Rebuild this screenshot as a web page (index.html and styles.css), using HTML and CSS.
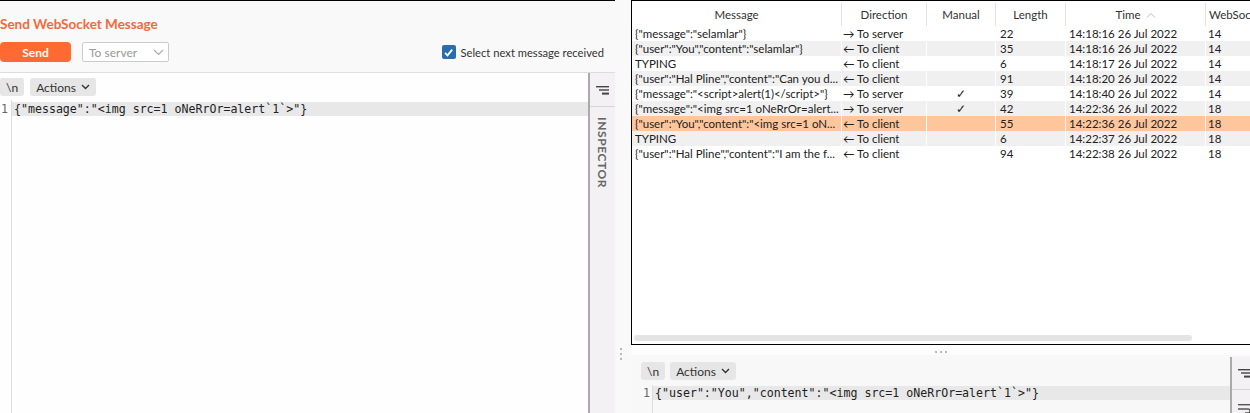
FILE: index.html
```html
<!DOCTYPE html>
<html>
<head>
<meta charset="utf-8">
<link rel="stylesheet" href="styles.css">
</head>
<body>
<div class="app">
  <section class="left">
    <header class="send-head">
      <h1 class="title">Send WebSocket Message</h1>
      <div class="send-row">
        <button class="btn-send">Send</button>
        <div class="select"><span>To server</span><svg class="chev" width="11" height="7" viewBox="0 0 11 7"><path d="M1 1l4.5 4.5L10 1" fill="none" stroke="#aaa" stroke-width="1.2"/></svg></div>
        <label class="chk"><span class="box"><svg width="13" height="13" viewBox="0 0 13 13"><path d="M3 6.8l2.5 2.6L10.2 3.6" fill="none" stroke="#fff" stroke-width="1.8"/></svg></span>Select next message received</label>
      </div>
    </header>
    <div class="left-body">
      <div class="ed-wrap">
        <div class="toolbar">
          <span class="tb-btn">\n</span>
          <span class="tb-btn">Actions <svg width="9" height="6" viewBox="0 0 9 6"><path d="M1 1l3.5 3.5L8 1" fill="none" stroke="#333" stroke-width="1.4"/></svg></span>
        </div>
        <div class="editor">
          <div class="gutter">1</div>
          <div class="code"><div class="line hl">{"message":"&lt;img src=1 oNeRrOr=alert`1`&gt;"}</div></div>
        </div>
      </div>
      <aside class="side">
        <div class="side-icon"><svg width="13" height="9" viewBox="0 0 13 9"><rect x="0" y="0" width="13" height="1.4" fill="#444"/><rect x="3" y="3.3" width="10" height="1.4" fill="#444"/><rect x="6" y="6.6" width="7" height="2" fill="#444"/></svg></div>
        <div class="side-label">INSPECTOR</div>
      </aside>
    </div>
  </section>

  <div class="splitter"><span class="vdots"><i></i><i></i><i></i></span></div>

  <section class="right">
    <div class="table-box">
      <div class="thead">
        <div class="th">Message</div>
        <div class="th">Direction</div>
        <div class="th">Manual</div>
        <div class="th">Length</div>
        <div class="th">Time <svg width="10" height="6" viewBox="0 0 10 6"><path d="M1 5.5l4-4 4 4" fill="none" stroke="#bbb" stroke-width="1"/></svg></div>
        <div class="th th-left">WebSocket ID</div>
      </div>
      <div class="rows">
        <div class="tr"><span class="c msg">{"message":"selamlar"}</span><span class="c dir">→ To server</span><span class="c man"></span><span class="c len">22</span><span class="c time">14:18:16 26 Jul 2022</span><span class="c ws">14</span></div>
        <div class="tr alt"><span class="c msg">{"user":"You","content":"selamlar"}</span><span class="c dir">← To client</span><span class="c man"></span><span class="c len">35</span><span class="c time">14:18:16 26 Jul 2022</span><span class="c ws">14</span></div>
        <div class="tr"><span class="c msg">TYPING</span><span class="c dir">← To client</span><span class="c man"></span><span class="c len">6</span><span class="c time">14:18:17 26 Jul 2022</span><span class="c ws">14</span></div>
        <div class="tr alt"><span class="c msg">{"user":"Hal Pline","content":"Can you d...</span><span class="c dir">← To client</span><span class="c man"></span><span class="c len">91</span><span class="c time">14:18:20 26 Jul 2022</span><span class="c ws">14</span></div>
        <div class="tr"><span class="c msg">{"message":"&lt;script&gt;alert(1)&lt;/script&gt;"}</span><span class="c dir">→ To server</span><span class="c man">✓</span><span class="c len">39</span><span class="c time">14:18:40 26 Jul 2022</span><span class="c ws">14</span></div>
        <div class="tr alt"><span class="c msg">{"message":"&lt;img src=1 oNeRrOr=alert...</span><span class="c dir">→ To server</span><span class="c man">✓</span><span class="c len">42</span><span class="c time">14:22:36 26 Jul 2022</span><span class="c ws">18</span></div>
        <div class="tr sel"><span class="c msg">{"user":"You","content":"&lt;img src=1 oN...</span><span class="c dir">← To client</span><span class="c man"></span><span class="c len">55</span><span class="c time">14:22:36 26 Jul 2022</span><span class="c ws">18</span></div>
        <div class="tr alt"><span class="c msg">TYPING</span><span class="c dir">← To client</span><span class="c man"></span><span class="c len">6</span><span class="c time">14:22:37 26 Jul 2022</span><span class="c ws">18</span></div>
        <div class="tr"><span class="c msg">{"user":"Hal Pline","content":"I am the f...</span><span class="c dir">← To client</span><span class="c man"></span><span class="c len">94</span><span class="c time">14:22:38 26 Jul 2022</span><span class="c ws">18</span></div>
      </div>
      <div class="hscroll"><div class="thumb"></div></div>
    </div>
    <div class="hsplit"><span class="hdots"><i></i><i></i><i></i></span></div>
    <div class="bottom">
      <div class="b-main">
        <div class="toolbar b-toolbar">
          <span class="tb-btn">\n</span>
          <span class="tb-btn">Actions <svg width="9" height="6" viewBox="0 0 9 6"><path d="M1 1l3.5 3.5L8 1" fill="none" stroke="#333" stroke-width="1.4"/></svg></span>
        </div>
        <div class="editor b-editor">
          <div class="gutter">1</div>
          <div class="code"><div class="line hl">{"user":"You","content":"&lt;img src=1 oNeRrOr=alert`1`&gt;"}</div></div>
        </div>
      </div>
      <aside class="side b-side">
        <div class="side-icon b-icon"><svg width="13" height="9" viewBox="0 0 13 9"><rect x="0" y="0" width="13" height="1.4" fill="#444"/><rect x="3" y="3.3" width="10" height="1.4" fill="#444"/><rect x="6" y="6.6" width="7" height="2" fill="#444"/></svg></div>
        <div class="b-icon2"><svg width="13" height="10" viewBox="0 0 13 10"><rect x="0" y="0" width="13" height="1.4" fill="#555"/><path d="M0 5h10a2 2 0 0 1 0 4H7" fill="none" stroke="#555" stroke-width="1.3"/></svg></div>
      </aside>
    </div>
  </section>
</div>
</body>
</html>
```

FILE: styles.css
```css
* { box-sizing: border-box; }
html, body {
  margin: 0;
  padding: 0;
  width: 1250px;
  height: 413px;
  overflow: hidden;
  background: #fdfdfd;
  font-family: "Lato", "Noto Sans", sans-serif;
  font-size: 12px;
  color: #333;
}
.app {
  display: flex;
  width: 1250px;
  height: 413px;
}

/* ---------- left panel ---------- */
.left {
  width: 615px;
  flex: none;
  display: flex;
  flex-direction: column;
  border-top: 1px solid #000;
}
.send-head {
  height: 72px;
  flex: none;
  background: #f9f9f9;
  padding-top: 14px;
  border-bottom: 1px solid #ddd;
}
.title {
  margin: 0;
  font-size: 13.5px;
  line-height: 18px;
  font-weight: 700;
  color: #f26a3a;
}
.send-row {
  display: flex;
  align-items: center;
  height: 20px;
  margin-top: 9px;
  padding-right: 11px;
}
.btn-send {
  width: 71px;
  height: 20px;
  border: none;
  border-radius: 4px;
  background: #ff6a33;
  color: #fff;
  font-family: inherit;
  font-size: 12px;
  font-weight: 700;
  padding: 0;
}
.select {
  margin-left: 11px;
  width: 87px;
  height: 20px;
  border: 1px solid #ccc;
  border-radius: 2px;
  background: #fff;
  display: flex;
  align-items: center;
  justify-content: space-between;
  padding: 0 4px 0 6px;
  color: #999;
}
.chk {
  margin-left: auto;
  display: flex;
  align-items: center;
  gap: 5px;
  color: #333;
  font-size: 11.2px;
}
.box {
  width: 14px;
  height: 14px;
  border-radius: 2px;
  background: #2b6cae;
  display: flex;
  align-items: center;
  justify-content: center;
}
.left-body {
  flex: 1;
  display: flex;
  min-height: 0;
}
.ed-wrap {
  width: 588px;
  flex: none;
  display: flex;
  flex-direction: column;
  background: #fefefe;
}
.toolbar {
  height: 27px;
  flex: none;
  display: flex;
  align-items: flex-start;
  gap: 6px;
  padding-top: 5px;
}
.tb-btn {
  height: 18px;
  display: inline-flex;
  align-items: center;
  gap: 5px;
  padding: 0 6px;
  background: #e6e6e6;
  border-radius: 3px;
  color: #333;
}
.editor {
  flex: 1;
  display: flex;
  font-family: "DejaVu Sans Mono", monospace;
  font-size: 11.6px;
}
.gutter {
  width: 12px;
  flex: none;
  border-right: 1px solid #ddd;
  color: #666;
  padding-top: 2px;
  line-height: 14px;
  padding-left: 1px;
}
.code {
  flex: 1;
  padding-top: 2px;
}
.line {
  height: 14px;
  line-height: 14px;
  padding-left: 2px;
  white-space: pre;
  color: #222;
}
.line.hl { background: #e8e8e8; }
.side {
  flex: 1;
  border-left: 2px solid #aaa;
  background: #f3f1f3;
  display: flex;
  flex-direction: column;
  align-items: center;
}
.side-icon {
  height: 34px;
  width: 100%;
  display: flex;
  align-items: center;
  justify-content: center;
  border-bottom: 1px solid #d6d6d6;
  padding-top: 1px;
}
.side-label {
  margin-top: 10px;
  writing-mode: vertical-rl;
  color: #666;
  font-size: 12px;
  letter-spacing: 0.6px;
  font-weight: 700;
}

/* ---------- splitter ---------- */
.splitter {
  width: 16px;
  flex: none;
  background: #f9f9f9;
  display: flex;
  flex-direction: column;
  justify-content: flex-end;
  align-items: center;
  padding-bottom: 53px;
}
.vdots {
  display: flex;
  flex-direction: column;
  gap: 3px;
  margin-left: -4px;
}
.vdots i, .hdots i {
  display: block;
  width: 2px;
  height: 2px;
  background: #b8b8b8;
}

/* ---------- right panel ---------- */
.right {
  flex: 1;
  min-width: 0;
  display: flex;
  flex-direction: column;
  overflow: hidden;
}
.table-box {
  height: 345px;
  width: 660px;
  flex: none;
  border: 1px solid #000;
  background: #fff;
  display: flex;
  flex-direction: column;
  font-size: 11.5px;
}
.thead, .tr {
  display: grid;
  grid-template-columns: 209px 85px 69px 70px 140px 120px;
}
.thead {
  height: 25px;
  flex: none;
}
.th {
  display: flex;
  align-items: center;
  justify-content: center;
  gap: 5px;
  color: #333;
  border-left: 1px solid #e2e2e2;
  margin: 2px 0 0;
}
.th:first-child { border-left: none; }
.th-left { justify-content: flex-start; padding-left: 3px; }
.rows { flex: 1; }
.tr {
  height: 15px;
  line-height: 15px;
  color: #222;
}
.tr.alt { background: #f0f0f0; }
.tr.sel { background: #fec69a; }
.c {
  white-space: nowrap;
  overflow: hidden;
  border-left: 1px solid rgba(255,255,255,0.9);
}
.c.msg { padding-left: 3px; border-left: none; }
.c.dir { padding-left: 1px; }
.c.man { text-align: center; }
.c.len { padding-left: 4px; }
.c.time { padding-left: 3px; }
.c.ws { padding-left: 2px; }
.hscroll {
  height: 6px;
  margin: 0 0 3px 2px;
  flex: none;
}
.thumb {
  width: 558px;
  height: 6px;
  border-radius: 3px;
  background: #e4e4e4;
}
.hsplit {
  height: 10px;
  flex: none;
  display: flex;
  justify-content: center;
  align-items: center;
  width: 619px;
}
.hdots { display: flex; gap: 3px; margin-top: 4px; }
.bottom {
  flex: 1;
  display: flex;
  background: #f8f8f8;
  width: 660px;
}
.b-main {
  width: 599px;
  flex: none;
  display: flex;
  flex-direction: column;
  padding-left: 10px;
}
.b-toolbar { height: 30px; padding-top: 7px; gap: 5px; }
.b-editor .gutter { width: 12px; padding-left: 2px; padding-top: 1px; }
.b-editor .code { padding-top: 1px; }
.b-side {
  margin-top: 2px;
  align-items: flex-start;
}
.b-icon {
  width: 20px;
  height: 33px;
  justify-content: flex-start;
  padding-left: 6px;
}
.b-icon2 { padding-left: 6px; padding-top: 12px; }
```
